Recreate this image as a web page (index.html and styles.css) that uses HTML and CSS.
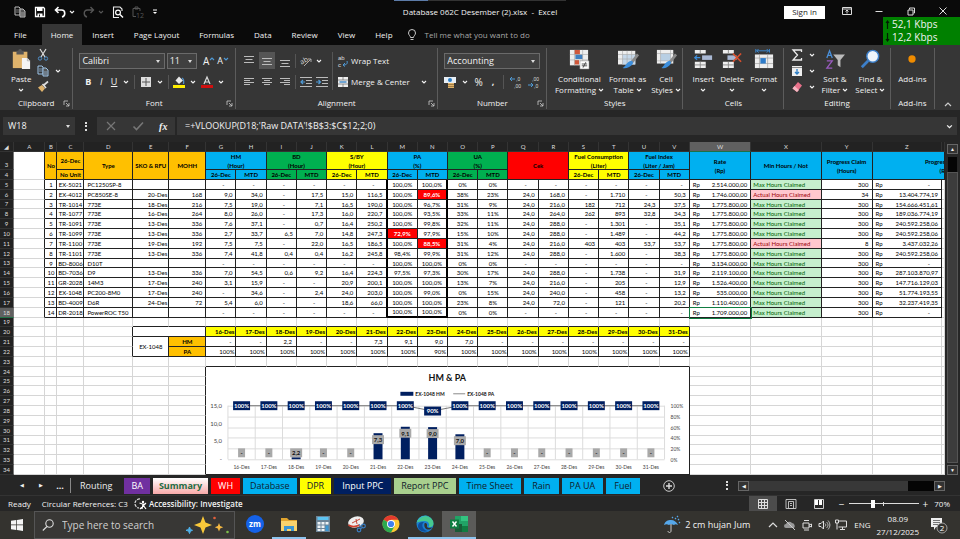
FILE: index.html
```html
<!DOCTYPE html>
<html lang="en">
<head>
<meta charset="utf-8">
<title>Database 062C Desember (2).xlsx - Excel</title>
<link rel="stylesheet" href="styles.css">
</head>
<body>
<svg class="sprite" aria-hidden="true">
  <symbol id="chev" viewBox="0 0 6 6"><path d="M1 2l2 2 2-2" fill="none" stroke="currentColor" stroke-width="1.1"/></symbol>
  <symbol id="launch" viewBox="0 0 7 7"><path d="M1 5V1h4M3 3l3 3M6 3v3H3" fill="none" stroke="#ccc" stroke-width=".8"/></symbol>
  <symbol id="pages" viewBox="0 0 12 12"><path d="M1 1h4l1 1v7H1z" fill="none" stroke="currentColor"/><path d="M6 3h3l2 2v6H6z" fill="#555" stroke="currentColor"/><path d="M7 7h3M7 9h3M2 4h3M2 6h3" stroke="currentColor" stroke-width=".7"/></symbol>
</svg>

<header class="title-bar">
  <div class="quick">
    <button aria-label="Copy"><svg class="i12 soft"><use href="#pages"/></svg></button>
    <button aria-label="Save"><svg class="i12" viewBox="0 0 12 12"><path d="M1.500 1.500h8l1 1v8h-9z" fill="none" stroke="#fff" stroke-width="1.300"/><path d="M3 1.500h5.500V5H3zM3.500 7.500h5v3h-5z" fill="#fff"/><path d="M5 8.500h1v2H5z" fill="#0a0a0a"/></svg></button>
    <button aria-label="Undo"><svg class="i12" viewBox="0 0 12 12"><path d="M4.500 1L1.500 4l3 3M2 4h5.500c4.500 0 4 6 .5 7" fill="none" stroke="#fff" stroke-width="1.600"/></svg><svg class="i6"><use href="#chev"/></svg></button>
    <button aria-label="Redo" class="dim"><svg class="i12" viewBox="0 0 12 12"><path d="M7.500 1l3 3-3 3M10 4H4.500C0 4 .5 10 4 11" fill="none" stroke="currentColor" stroke-width="1.400"/></svg><svg class="i6"><use href="#chev"/></svg></button>
    <button aria-label="Print preview"><svg class="i12" viewBox="0 0 12 12"><path d="M10 5V3L8 1H1.500v10.500H7" fill="none" stroke="#eee" stroke-width="1.100"/><circle cx="6" cy="6.500" r="2.400" fill="none" stroke="#fff" stroke-width="1.200"/><path d="M8 8.500l3 3" stroke="#fff" stroke-width="1.400"/></svg></button>
    <button aria-label="Paste values" class="dim"><svg class="i12" viewBox="0 0 12 12"><path d="M4 10.500H1v-8h7V5M3 1h3v2H3z" fill="none" stroke="currentColor"/><text x="4" y="11.500" font-size="7" fill="currentColor">12</text></svg></button>
    <button aria-label="Customize"><svg class="i6" viewBox="0 0 6 6"><path d="M1 1h4" stroke="#fff"/><path d="M1 3h4L3 5z" fill="#fff"/></svg></button>
  </div>
  <h1>Database 062C Desember (2).xlsx&nbsp; -&nbsp; Excel</h1>
  <div class="window-tools">
    <button class="signin">Sign in</button>
    <button aria-label="Ribbon options"><svg class="i10" viewBox="0 0 10 10"><path d="M.5 1.500h9v7h-9zM.5 3h9M5 7.500v-3M3.500 5.500L5 4l1.500 1.500" fill="none" stroke="#ddd"/></svg></button>
    <button aria-label="Minimize"><svg class="i10" viewBox="0 0 10 10"><path d="M1.500 5.500h7" stroke="#ddd"/></svg></button>
    <button aria-label="Restore"><svg class="i10" viewBox="0 0 10 10"><path d="M2 4h5v5H2zM3.500 3.500v-1.500H8.500v5H7.500" fill="none" stroke="#ddd"/></svg></button>
    <button aria-label="Close"><svg class="i10" viewBox="0 0 10 10"><path d="M1.500 1.500l7 7M8.500 1.500l-7 7" stroke="#ddd"/></svg></button>
  </div>
  <aside class="netspeed">
    <p><svg viewBox="0 0 5 9"><path d="M2.500 9V1M1 3l1.500-2L4 3" fill="none" stroke="#031c03" stroke-width="1.200"/></svg>52,1 Kbps</p>
    <p><svg viewBox="0 0 5 9"><path d="M2.500 0v8M1 6l1.500 2L4 6" fill="none" stroke="#031c03" stroke-width="1.200"/></svg>12,2 Kbps</p>
  </aside>
</header>

<nav class="menu">
  <a href="#file">File</a><a href="#home" class="on">Home</a><a href="#insert">Insert</a><a href="#layout">Page Layout</a><a href="#formulas">Formulas</a><a href="#data">Data</a><a href="#review">Review</a><a href="#view">View</a><a href="#help">Help</a>
  <svg class="i12" viewBox="0 0 12 12"><path d="M4.500 8.500C4.500 7 2.500 6 2.500 4a3.500 3.500 0 017 0c0 2-2 3-2 4.500zM4.500 10.500h3" fill="none" stroke="#ddd" stroke-width=".9"/></svg>
  <a href="#tell" class="tell">Tell me what you want to do</a>
</nav>

<section class="ribbon">
  <div class="group g-clip">
    <div class="tools">
      <button class="big"><svg viewBox="0 0 22 22"><path d="M2 3h16v18H2z" fill="#dfb36c"/><path d="M6 2h2a2 2 0 014 0h2v4H6z" fill="#555"/><path d="M12 10h6l3 3v9h-9z" fill="#f4f4f4"/><path d="M18 10v3h3" fill="none" stroke="#999" stroke-width=".7"/></svg><span>Paste</span><svg class="i6"><use href="#chev"/></svg></button>
      <div class="stack">
        <button aria-label="Cut"><svg class="i12" viewBox="0 0 12 12"><path d="M3 0l5 8M9 0L4 8" stroke="#ddd" stroke-width="1.200"/><circle cx="3" cy="9.500" r="1.700" fill="none" stroke="#4f8fc9"/><circle cx="9" cy="9.500" r="1.700" fill="none" stroke="#4f8fc9"/></svg></button>
        <button aria-label="Copy"><svg class="i12 pale"><use href="#pages"/></svg></button>
        <button aria-label="Format painter"><svg class="i12" viewBox="0 0 12 12"><path d="M7 4l4-3.500M5.500 3l3.500 4" stroke="#ddd" stroke-width="1.700"/><path d="M5 4l3 3.500L5 11 1 6.500z" fill="#dfb36c"/></svg></button>
      </div>
      <svg class="i6"><use href="#chev"/></svg>
    </div>
    <footer>Clipboard<svg class="i7"><use href="#launch"/></svg></footer>
  </div>

  <div class="group g-font">
    <div class="tools rows">
      <div class="row">
        <label class="combo wide"><select aria-label="Font"><option>Calibri</option></select></label>
        <label class="combo"><select aria-label="Font size"><option>11</option></select></label>
        <button class="letter grow" aria-label="Increase font size">A<svg class="i6" viewBox="0 0 6 6"><path d="M1 4l2-2 2 2" fill="none" stroke="#4f9ad6" stroke-width="1.200"/></svg></button>
        <button class="letter" aria-label="Decrease font size">A<svg class="i6" viewBox="0 0 6 6"><path d="M1 2l2 2 2-2" fill="none" stroke="#4f9ad6" stroke-width="1.200"/></svg></button>
      </div>
      <div class="row spread">
        <button class="letter"><b>B</b></button><button class="letter"><i>I</i></button><button class="letter"><u>U</u></button><svg class="i6"><use href="#chev"/></svg><span class="bar"></span>
        <button aria-label="Borders"><svg class="i12" viewBox="0 0 12 12"><path d="M1 1h10v10H1z" fill="#ddd"/><path d="M6 2v8M2 6h8" stroke="#555"/></svg></button><svg class="i6"><use href="#chev"/></svg><span class="bar"></span>
        <button aria-label="Fill color"><svg class="i12" viewBox="0 0 12 12"><path d="M6 .5l4 4L6 8 2.500 4.500z" fill="#e8e8e8"/><path d="M9 2c2 1 2 3 1.500 6" fill="none" stroke="#4f8fc9" stroke-width="1.300"/><path d="M0 9h12v3H0z" fill="#ffee00"/></svg></button><svg class="i6"><use href="#chev"/></svg>
        <button aria-label="Font color"><svg class="i12" viewBox="0 0 12 12"><path d="M3 8L6 1l3 7M4 6h4" fill="none" stroke="#ddd" stroke-width="1.200"/><path d="M0 9h12v3H0z" fill="#d00f0f"/></svg></button><svg class="i6"><use href="#chev"/></svg>
      </div>
    </div>
    <footer>Font<svg class="i7"><use href="#launch"/></svg></footer>
  </div>

  <div class="group g-align">
    <div class="tools two">
      <div class="rows">
        <div class="row">
          <button aria-label="Top align"><svg class="i12" viewBox="0 0 12 12"><path d="M1 1.500h10M2.500 4.500h7M1 7.500h10" stroke="#bbb"/></svg></button>
          <button aria-label="Middle align" class="lit"><svg class="i12" viewBox="0 0 12 12"><path d="M1 3.500h10M2.500 6.500h7M1 9.500h10" stroke="#bbb"/></svg></button>
          <button aria-label="Bottom align"><svg class="i12" viewBox="0 0 12 12"><path d="M1 5.500h10M2.500 8.500h7M1 11.500h10" stroke="#bbb"/></svg></button>
          <span class="bar"></span>
          <button aria-label="Orientation"><svg class="i12" viewBox="0 0 12 12"><path d="M4 11l7-7M8 4h3v3" fill="none" stroke="#aaa"/><text x="0" y="8" font-size="7" fill="#ddd" transform="rotate(-30 4 6)">ab</text></svg></button><svg class="i6"><use href="#chev"/></svg>
        </div>
        <div class="row">
          <button aria-label="Align left"><svg class="i12" viewBox="0 0 12 12"><path d="M1 2.500h10M1 4.500h6M1 6.500h10M1 8.500h6" stroke="#bbb"/></svg></button>
          <button aria-label="Center" class="mid-btn"><svg class="i12" viewBox="0 0 12 12"><path d="M1 2.500h10M3 4.500h6M1 6.500h10M3 8.500h6" stroke="#bbb"/></svg></button>
          <button aria-label="Align right"><svg class="i12" viewBox="0 0 12 12"><path d="M1 2.500h10M5 4.500h6M1 6.500h10M5 8.500h6" stroke="#bbb"/></svg></button>
          <span class="bar"></span>
          <button aria-label="Decrease indent"><svg class="i12" viewBox="0 0 12 12"><path d="M0 1.500h12M6 4.500h6M6 7.500h6M0 10.500h12" stroke="#bbb"/><path d="M5 6H1M3 4L1 6l2 2" fill="none" stroke="#4f9ad6" stroke-width="1.200"/></svg></button>
          <button aria-label="Increase indent"><svg class="i12" viewBox="0 0 12 12"><path d="M0 1.500h12M6 4.500h6M6 7.500h6M0 10.500h12" stroke="#bbb"/><path d="M0 6h4M2.500 4l2 2-2 2" fill="none" stroke="#4f9ad6" stroke-width="1.200"/></svg></button>
        </div>
      </div>
      <span class="bar tall"></span>
      <div class="rows">
        <button class="row text"><svg class="i12 tiny" viewBox="0 0 12 12"><text x="1" y="5" font-size="6">ab</text><text x="1" y="12" font-size="6">c</text><path d="M10 6c1 3-1 4-4 4M8 8l-2 2 2 1.500" fill="none" stroke="#4f9ad6"/></svg>Wrap Text</button>
        <button class="row text"><svg class="i12" viewBox="0 0 12 12"><path d="M1 1h10v10H1z" fill="#eee"/><path d="M1 4h10M1 8h10M6 1v3M6 8v3" stroke="#777" stroke-width=".8"/><path d="M2.500 6h7" stroke="#2b7cc4" stroke-width="1.300"/></svg>Merge &amp; Center<svg class="i6 far"><use href="#chev"/></svg></button>
      </div>
    </div>
    <footer>Alignment<svg class="i7"><use href="#launch"/></svg></footer>
  </div>

  <div class="group g-num">
    <div class="tools rows">
      <div class="row"><label class="combo wide"><select aria-label="Number format"><option>Accounting</option></select></label></div>
      <div class="row spread">
        <button aria-label="Accounting format"><svg class="i12" viewBox="0 0 12 12"><path d="M0 1h12v6H0z" fill="#e6eef6"/><circle cx="6" cy="4" r="2" fill="#2b7cc4"/><path d="M4 7h6v5H4z" fill="#dfb36c"/><path d="M4 8.500h6M4 10.500h6" stroke="#7a5a2a" stroke-width=".6"/></svg></button><svg class="i6"><use href="#chev"/></svg>
        <button class="letter big-l">%</button><button class="letter"><b>,</b></button><span class="bar"></span>
        <button aria-label="Increase decimal"><svg class="i12 tiny" viewBox="0 0 12 12"><path d="M5 3H0M2 1L0 3l2 2" fill="none" stroke="#4f9ad6"/><text x="6" y="5" font-size="5">,0</text><text x="4" y="12" font-size="5">,00</text></svg></button>
        <button aria-label="Decrease decimal"><svg class="i12 tiny" viewBox="0 0 12 12"><path d="M0 9h5M3 7l2 2-2 2" fill="none" stroke="#4f9ad6"/><text x="4" y="5" font-size="5">,00</text><text x="6" y="12" font-size="5">,0</text></svg></button>
      </div>
    </div>
    <footer>Number<svg class="i7"><use href="#launch"/></svg></footer>
  </div>

  <div class="group g-styles">
    <div class="tools">
      <button class="big"><svg viewBox="0 0 22 22"><path d="M1 1h20v17H1z" fill="#eee"/><path d="M6 1h6v5H6zM6 12h5v5H6z" fill="#d0573a"/><path d="M7 6h8v5H7z" fill="#3f7fbf"/><path d="M1 6h20M1 12h20M6 1v17M15 1v17" stroke="#aaa" stroke-width=".7"/><path d="M12 13h10v9H12z" fill="#fff" stroke="#888" stroke-width=".6"/><path d="M14 16.500h6M14 18.500h6M18.500 14.500l-3 6" stroke="#333" stroke-width=".9"/></svg><span>Conditional</span><span>Formatting<svg class="i6"><use href="#chev"/></svg></span></button>
      <button class="big"><svg viewBox="0 0 22 22"><path d="M0 2h19v15H0z" fill="#eee"/><path d="M5 6h14v11H5z" fill="#c5d8ea"/><path d="M0 6h19M0 11h19M5 2v15M10 2v15M15 2v15" stroke="#aaa" stroke-width=".7"/><path d="M22 6l-7 9" stroke="#8a8a8a" stroke-width="3"/><path d="M15 13c2 1 2 3 0 5s-6 4-10 3c4-2 4-7 10-8z" fill="#3d8edb"/></svg><span>Format as</span><span>Table<svg class="i6"><use href="#chev"/></svg></span></button>
      <button class="big"><svg viewBox="0 0 22 22"><path d="M1 1h18v15H1z" fill="#eee"/><path d="M5 5h11v8H5z" fill="#b8cfe4"/><path d="M1 5h18M1 13h18M5 1v15M16 1v15" stroke="#aaa" stroke-width=".7"/><path d="M22 6l-7 9" stroke="#8a8a8a" stroke-width="3"/><path d="M15 13c2 1 2 3 0 5s-5 4-9 3c3-2 4-7 9-8z" fill="#3d8edb"/></svg><span>Cell</span><span>Styles<svg class="i6"><use href="#chev"/></svg></span></button>
    </div>
    <footer>Styles</footer>
  </div>

  <div class="group g-cells">
    <div class="tools">
      <button class="big"><svg viewBox="0 0 22 22"><path d="M2 1h12v4H2zM2 14h12v7H2z" fill="#eee"/><path d="M8 1v4M8 14v7M2 17.500h12" stroke="#888"/><path d="M10 7h11v5H10z" fill="#a9b8d4"/><path d="M8 9.500H2M4.500 7L2 9.500 4.500 12" fill="none" stroke="#3d8edb" stroke-width="1.400"/></svg><span>Insert</span><svg class="i6"><use href="#chev"/></svg></button>
      <button class="big"><svg viewBox="0 0 22 22"><path d="M1 1h12v4H1zM1 14h12v7H1z" fill="#eee"/><path d="M7 1v4M7 14v7M1 17.500h12" stroke="#888"/><path d="M6 7h10v5H6z" fill="#a9b8d4"/><path d="M12 5l9 9M21 5l-9 9" stroke="#d8502e" stroke-width="1.800"/></svg><span>Delete</span><svg class="i6"><use href="#chev"/></svg></button>
      <button class="big"><svg viewBox="0 0 22 22"><path d="M2 0v4M17 0v4M3 2h13M5 0L3 2l2 2M14 0l2 2-2 2" fill="none" stroke="#3d8edb"/><path d="M1 6h20v15H1z" fill="#eee"/><path d="M1 10h20M1 16h20M6 6v15M15 6v15" stroke="#999" stroke-width=".7"/><path d="M7 10h6v6H7z" fill="#2f7cc9"/></svg><span>Format</span><svg class="i6"><use href="#chev"/></svg></button>
    </div>
    <footer>Cells</footer>
  </div>

  <div class="group g-edit">
    <div class="tools">
      <div class="stack">
        <button aria-label="AutoSum"><svg class="i12" viewBox="0 0 12 12"><path d="M10.500 3V1H2l4.500 5L2 11h8.500V9" fill="none" stroke="#eee" stroke-width="1.300"/></svg><svg class="i6"><use href="#chev"/></svg></button>
        <button aria-label="Fill"><svg class="i12" viewBox="0 0 12 12"><path d="M1 1h10v10H1z" fill="#eee"/><path d="M6 4v5M4 7l2 2 2-2" fill="none" stroke="#2b7cc4" stroke-width="1.300"/><path d="M1 2.500h10" stroke="#888"/></svg><svg class="i6"><use href="#chev"/></svg></button>
        <button aria-label="Clear"><svg class="i12" viewBox="0 0 12 12"><path d="M7 1l4 3.500L6 11 1.500 7.500z" fill="#e8718a"/><path d="M3.500 5l4.500 4-2 2-4.500-3.500z" fill="#f4b7c2"/></svg><svg class="i6"><use href="#chev"/></svg></button>
      </div>
      <button class="big"><svg viewBox="0 0 22 22"><path d="M2 10L5 2l3 8M3 7h4" fill="none" stroke="#4a8fd8" stroke-width="1.400"/><path d="M2 13h6l-6 8h6" fill="none" stroke="#9a5bc0" stroke-width="1.400"/><path d="M9 6h13l-5 6v8l-3-2v-6z" fill="#bbb"/></svg><span>Sort &amp;</span><span>Filter<svg class="i6"><use href="#chev"/></svg></span></button>
      <button class="big"><svg viewBox="0 0 22 22"><path d="M9 13l-7 7" stroke="#3d7fc9" stroke-width="3"/><circle cx="14" cy="8" r="6.500" fill="#eef4fa" stroke="#3d7fc9" stroke-width="1.600"/></svg><span>Find &amp;</span><span>Select<svg class="i6"><use href="#chev"/></svg></span></button>
    </div>
    <footer>Editing</footer>
  </div>

  <div class="group g-add">
    <div class="tools">
      <button class="big"><svg viewBox="0 0 22 22"><circle cx="11" cy="11" r="4" fill="#f08c00"/></svg><span>Add-ins</span></button>
    </div>
    <footer>Add-ins</footer>
  </div>
  <div class="collapse"><svg class="i10" viewBox="0 0 10 10"><path d="M2 7l3-3 3 3" fill="none" stroke="#ccc" stroke-width="1.200"/></svg></div>
</section>

<section class="formula">
  <label class="namebox"><input aria-label="Name box" value="W18"></label>
  <span class="grip"></span>
  <div class="fx">
    <svg class="i12" viewBox="0 0 12 12"><path d="M2 2l8 8M10 2l-8 8" stroke="#777" stroke-width="1.200"/></svg>
    <svg class="i12" viewBox="0 0 12 12"><path d="M1.500 6.500l3 3L11 2.500" fill="none" stroke="#777" stroke-width="1.600"/></svg>
    <i>fx</i>
  </div>
  <label class="fbar"><input aria-label="Formula bar" value="=+VLOOKUP(D18;'Raw DATA'!$B$3:$C$12;2;0)"><svg class="i7"><use href="#chev"/></svg></label>
</section>

<main class="sheet">
  <table id="grid"></table>
  <div class="vscroll"><button aria-label="Scroll up">▲</button><span></span><button aria-label="Scroll down">▼</button></div>
</main>

<nav class="sheet-tabs">
  <span class="arrow">◀</span><span class="arrow">▶</span><span class="more">...</span>
  <div class="tab-list">
    <a href="#s1" class="plain">Routing</a><a href="#s2" class="purple">BA</a><a href="#s3" class="current">Summary</a><a href="#s4" class="red">WH</a><a href="#s5">Database</a><a href="#s6" class="yellow">DPR</a><a href="#s7" class="navy">Input PPC</a><a href="#s8" class="green">Report PPC</a><a href="#s9">Time Sheet</a><a href="#s10">Rain</a><a href="#s11">PA UA</a><a href="#s12">Fuel</a>
  </div>
  <button class="plus" aria-label="New sheet"><svg class="i12" viewBox="0 0 12 12"><circle cx="6" cy="6" r="5.300" fill="none" stroke="#ddd" stroke-width=".9"/><path d="M6 3v6M3 6h6" stroke="#ddd" stroke-width="1.400"/></svg></button>
  <span class="grip"></span>
  <div class="hscroll"><button aria-label="Scroll left">◀</button><span></span><button aria-label="Scroll right">▶</button></div>
</nav>

<section class="status">
  <span>Ready</span><span>Circular References: C3</span>
  <span class="acc"><svg class="i12" viewBox="0 0 12 12"><path d="M5 1a4.500 4.500 0 00-1 9" fill="none" stroke="#ddd" stroke-width="1.200" stroke-dasharray="3 1"/><circle cx="8" cy="4" r="1.200" fill="#fff"/><path d="M4.500 5l3 1h3M8 6l-1 5M8 7l3 4M5 11l6-6" stroke="#fff" stroke-width="1.200"/></svg><b>Accessibility: Investigate</b></span>
  <div class="view-tools">
    <div class="views">
      <button class="on" aria-label="Normal"><svg class="i12" viewBox="0 0 12 12"><path d="M1.500 1.500h9v9h-9zM1.500 4.500h9M1.500 7.500h9M4.500 1.500v9M7.500 1.500v9" fill="none" stroke="#ddd"/></svg></button>
      <button aria-label="Page layout"><svg class="i12" viewBox="0 0 12 12"><path d="M1 1.500h10v9H1zM3.500 3.500h5v7h-5zM5 5.500h2M5 7.500h2" fill="none" stroke="#ccc" stroke-width=".9"/></svg></button>
      <button aria-label="Page break"><svg class="i12" viewBox="0 0 12 12"><path d="M1.500 1.500h9v9h-9z" fill="none" stroke="#ccc"/><path d="M2 2h3v5H2zM6 2h3v5H6z" fill="#fff"/></svg></button>
    </div>
    <div class="zoom"><span>−</span><input type="range" min="0" max="100" value="34" aria-label="Zoom"><span>+</span></div>
    <output>70%</output>
  </div>
</section>

<footer class="taskbar">
  <button class="start" aria-label="Start"><svg class="i12" viewBox="0 0 12 12"><path d="M0 1.700L5.300 1v4.600H0zM6 .9L12 0v5.600H6zM0 6.300h5.300V11L0 10.300zM6 6.300h6V12l-6-.9z" fill="#f4f4f4"/></svg></button>
  <label class="search"><svg class="i12" viewBox="0 0 12 12"><circle cx="7.500" cy="4.500" r="3.700" fill="none" stroke="#ddd" stroke-width="1.100"/><path d="M5 7.500L.8 11.500" stroke="#ddd" stroke-width="1.100"/></svg><input placeholder="Type here to search" aria-label="Search"><svg class="spark" viewBox="0 0 44 18"><path d="M17 0l2.500 6.500L26 9l-6.500 2.500L17 18l-2.500-6.500L8 9l6.500-2.500z" fill="#f9c83a"/><path d="M33 7l1.200 3 3 1.200-3 1.200L33 15.500l-1.200-3.100-3-1.200 3-1.200z" fill="#f5b942"/><path d="M3.500 11l1 2.500 2 .8-2 .8-1 2.500-1-2.500-2.500-.8 2.500-.8z" fill="#4fb0e8" stroke="#4fb0e8"/><circle cx="28.500" cy="2" r="1.300" fill="#e2603c"/><circle cx="41.500" cy="16" r="1.300" fill="#7cc04a"/></svg></label>
  <div class="apps">
    <button aria-label="Zoom"><svg viewBox="0 0 20 20"><circle cx="10" cy="10" r="9" fill="#1562e8"/><text x="10" y="13" font-size="8" font-weight="700" fill="#fff" text-anchor="middle">zm</text></svg></button>
    <button aria-label="Files" class="open"><svg viewBox="0 0 20 20"><path d="M2 4h6l2 2h8v10H2z" fill="#e0a42e"/><path d="M2 7h16v10H2z" fill="#f9d36c"/><path d="M5 17v-5h10v5h-3v-2H8v2z" fill="#3b96d2"/></svg></button>
    <button aria-label="Calculator"><svg viewBox="0 0 20 20"><path d="M3 2h14v16H3z" fill="#6d8598"/><path d="M4.500 3h11v3h-11z" fill="#5cc3f0"/><path d="M4.500 8h3v2.500h-3zM8.500 8h3v2.500h-3zM12.500 8h3v2.500h-3zM4.500 11.500h3V14h-3zM8.500 11.500h3V14h-3zM4.500 15h3v2h-3zM8.500 15h3v2h-3z" fill="#eef3f6"/><path d="M12.500 11.500h3V17h-3z" fill="#3b96d2"/></svg></button>
    <button aria-label="Snipping tool"><svg viewBox="0 0 20 20"><ellipse cx="9" cy="8" rx="8" ry="5.500" fill="#eee" transform="rotate(-15 9 8)"/><path d="M1.500 11c3 2 7 2 11 0" fill="none" stroke="#d0402e" stroke-width="1.600"/><path d="M5 9l8-4M9 5l1 5" stroke="#c54a3a"/><circle cx="12" cy="16" r="1.800" fill="none" stroke="#3b7fc4" stroke-width="1.200"/><circle cx="16.500" cy="12" r="1.800" fill="none" stroke="#3b7fc4" stroke-width="1.200"/><path d="M12 10l3 5" stroke="#3b7fc4"/></svg></button>
    <button aria-label="Chrome"><svg viewBox="0 0 20 20"><circle cx="10" cy="10" r="8.500" fill="#fcc934"/><path d="M10 10L2.600 5.700A8.500 8.500 0 0117.400 5.700H10z" fill="#e33b2e"/><path d="M10 10L2.600 5.700A8.500 8.500 0 0010 18.500l3.700-6.400z" fill="#2da94f"/><circle cx="10" cy="10" r="4" fill="#fff"/><circle cx="10" cy="10" r="3.100" fill="#4080ee"/></svg></button>
    <button aria-label="Edge" class="open"><svg viewBox="0 0 20 20"><circle cx="10" cy="10" r="8.500" fill="#1b7fd0"/><path d="M1.600 9A8.500 8.500 0 0118.500 9.500c0 3-2.500 4-5 3.500 2-3-.5-6-4-6-4 0-7 1-7.900 2z" fill="#46c98f"/><path d="M1.600 9c1-5 6-8 11-7C6 2 3 6 1.600 9z" fill="#36b3d8"/><path d="M9 8c-3 2-2 8 4 9-5 2-10-1-10-5 0-3 3-4.500 6-4z" fill="#0f4f9c"/><path d="M9.500 9.500c1-1 3 0 2.500 2s1 3 5 2c-2 4-9 2-7.500-4z" fill="#34332f"/></svg></button>
    <button aria-label="Excel" class="open active"><svg viewBox="0 0 20 20"><path d="M6 2h13v16H6z" fill="#21a366"/><path d="M12 2h7v5h-7z" fill="#33c481"/><path d="M6 10h7v8H6z" fill="#185c37"/><path d="M13 12h6v6h-6z" fill="#107c41"/><path d="M1 5.500h9v9H1z" fill="#107c41"/><path d="M3.500 7.500l4 5M7.500 7.500l-4 5" stroke="#fff" stroke-width="1.400"/></svg></button>
  </div>
  <div class="tray">
    <span class="weather"><svg viewBox="0 0 18 18"><path d="M1 9c1-4 4-5 7-5s6 2 7 5c-2-1-3-1-4 0-2-1-4-1-5 0-2-1-3-1-5 0z" fill="#56a8ea"/><path d="M8 8v7c0 2-3 2-3 0" fill="none" stroke="#ccc"/><path d="M9 2l1-1M12 3l1-1M15 4l1-1M14 1l1-1M16 7l1-1" stroke="#56a8ea" stroke-width="1.300"/></svg>2 cm hujan Jum</span>
    <svg class="i12" viewBox="0 0 12 12"><path d="M2 8l4-4 4 4" fill="none" stroke="#ddd" stroke-width="1.200"/></svg>
    <svg class="i12" viewBox="0 0 12 12"><path d="M2 9a2 2 0 010-4 3.500 3.500 0 016-1 3 3 0 012 5z" fill="#999"/><path d="M1 1l10 10" stroke="#ccc"/></svg>
    <svg class="i12" viewBox="0 0 12 12"><path d="M2 4h6v5H2zM8 6l2.500-1v3L8 7M3 1.500h5M3 11h5" fill="none" stroke="#ddd"/></svg>
    <svg class="i12" viewBox="0 0 12 12"><path d="M1 4.500h2L5.500 2v8L3 7.500H1z" fill="none" stroke="#ddd"/><path d="M7 4.500c1 1 1 2 0 3M8.500 3c2 2 2 4 0 6M10 1.500c2.500 3 2.500 6 0 9" fill="none" stroke="#ddd" stroke-width=".8"/></svg>
    <svg class="i12" viewBox="0 0 12 12"><path d="M3.500 2h8v6h-8M5 10.500h5M7.500 8v2.500M.5 1h3v3h-3zM2 4v6.500" fill="none" stroke="#ddd"/></svg>
    <span class="lang">ENG</span>
    <time>08.09<br>27/12/2025</time>
    <span class="note"><svg viewBox="0 0 18 18"><path d="M1 2h11v9H6l-2 3v-3H1z" fill="#eee"/><path d="M3 4.500h7M3 6.500h7M3 8.500h5" stroke="#555" stroke-width=".8"/><circle cx="12" cy="12" r="5" fill="#34332f" stroke="#bbb" stroke-width=".8"/><text x="12" y="15" font-size="8" fill="#fff" text-anchor="middle">2</text></svg></span>
  </div>
</footer>
<script src="sheet.js"></script>
</body>
</html>
```

FILE: styles.css
```css
* { box-sizing: border-box; }
html, body { height: 100%; }
body {
  margin: 0; display: flex; flex-direction: column; overflow: hidden;
  background: #262626; color: #f2f2f2;
  font: 8px/10px "Open Sans", "Noto Sans", sans-serif;
}
button, input, select { font: inherit; color: inherit; background: none; border: 0; padding: 0; margin: 0; }
button { display: flex; align-items: center; justify-content: center; }
a { color: inherit; text-decoration: none; }
svg { display: block; flex: none; overflow: visible; }
.sprite { position: absolute; width: 0; height: 0; }
.i6 { width: 6px; height: 6px; }
.i7 { width: 7px; height: 7px; }
.i10 { width: 10px; height: 10px; }
.i12 { width: 12px; height: 12px; }
.soft { color: #bbb; }
.pale { color: #9cc3e6; }
.dim { color: #555; }
.tiny { font-family: "Liberation Sans", sans-serif; fill: #ddd; }

/* title bar */
.title-bar { position: relative; flex: none; height: 24px; background: #0a0a0a; display: grid; grid-template-columns: 1fr auto 1fr; align-items: center; }
.title-bar::before { content: ""; position: absolute; top: 0; left: 41%; width: 18%; height: 1px; background: linear-gradient(90deg, #5c7ba8 20%, #333 20%); }
.quick { display: flex; gap: 8px; padding-left: 14px; }
.quick button { gap: 3px; }
.title-bar h1 { margin: 0; font-size: 8px; font-weight: 400; }
.window-tools { display: flex; justify-content: flex-end; align-items: center; gap: 22px; padding-right: 12px; }
.signin { background: #fff; color: #222; width: 41px; height: 13px; margin-right: -5px; }
.netspeed { position: absolute; right: 0; top: 17px; width: 77px; height: 28px; background: #008000; z-index: 2; padding: 1px 2px; font-size: 10px; line-height: 13px; }
.netspeed p { margin: 0; display: flex; align-items: center; gap: 2px; }
.netspeed svg { width: 5px; height: 9px; }
.window-tools button:not(.signin) { padding-bottom: 3px; }

/* menu */
.menu { flex: none; height: 21px; background: #0a0a0a; display: flex; align-items: stretch; padding-left: 4px; }
.menu a { padding: 0 10px; display: flex; align-items: center; }
.menu a:first-child { margin-right: 5px; }
.menu .on { background: #363636; padding: 0 9px; }
.menu > svg { align-self: center; margin-left: 3px; }
.menu .tell { color: #a6a6a6; padding-left: 7px; }

/* ribbon */
.ribbon { flex: none; height: 65px; background: #363636; display: flex; padding: 3px 0 1px; }
.group { position: relative; display: flex; flex-direction: column; border-right: 1px solid #5c5c5c; min-width: 0; }
.g-clip { flex: 73 1 0; }
.g-font { flex: 163 1 0; }
.g-align { flex: 203 1 0; }
.g-num { flex: 109 1 0; }
.g-styles { flex: 136 1 0; }
.g-cells { flex: 101 1 0; }
.g-edit { flex: 106 1 0; }
.g-add { flex: 44 1 0; }
.collapse { flex: 25 1 0; display: flex; align-items: flex-end; justify-content: center; }
.group footer { height: 12px; line-height: 12px; text-align: center; }
.group footer svg { position: absolute; right: 2px; bottom: 2px; }
.tools { flex: 1; display: flex; justify-content: center; gap: 6px; padding: 1px 4px 0; align-items: flex-start; min-height: 0; }
.big { flex-direction: column; justify-content: flex-start; line-height: 11px; }
.big > svg:first-child { width: 20px; height: 20px; margin-bottom: 4px; }
.big > .i6 { margin-top: 3px; }
.big span { display: flex; align-items: center; gap: 2px; white-space: nowrap; }
.stack { display: flex; flex-direction: column; gap: 4px; }
.stack button { gap: 6px; }
.g-clip .tools > .i6 { margin-top: 19px; }
.g-styles .tools { gap: 5px; padding-left: 10px; }
.g-cells .tools { padding-left: 7px; }
.g-edit .tools { gap: 7px; padding-left: 6px; }
.rows { display: flex; flex-direction: column; justify-content: flex-start; gap: 4px; }
.tools.rows { align-items: stretch; padding: 4px 6px 0; }
.row { display: flex; align-items: center; gap: 4px; height: 17px; }
.g-font .row:first-child { gap: 2px; }
.spread { justify-content: space-between; padding: 0 5px; }
.g-num .spread { padding: 0; }
.combo { position: relative; flex: 30 1 0; display: flex; border: 1px solid #6a6a6a; background: #404040; height: 16px; font-size: 9px; }
.combo.wide { flex: 88 1 0; }
.combo select { appearance: none; width: 100%; padding-left: 2px; }
.combo::after, .namebox::after { content: ""; position: absolute; right: 4px; top: 6px; border: 2px solid transparent; border-top: 3px solid #ddd; }
.letter { font-size: 9px; min-width: 8px; }
.letter svg { align-self: flex-start; }
.grow { margin-left: 4px; font-size: 10px; }
.big-l { font-size: 10px; }
.lit, .mid-btn { height: 17px; padding: 0 2px; }
.lit { background: #555; }
.bar { width: 1px; height: 14px; background: #555; }
.two { gap: 4px; padding: 4px 4px 0 7px; justify-content: flex-start; }
.two .row { gap: 4px; }
.bar.tall { height: 38px; }
.two .text { font-size: 8px; white-space: nowrap; justify-content: flex-start; gap: 2px; }
.far { margin-left: 9px; }

/* formula bar */
.formula { flex: none; display: flex; align-items: center; height: 32px; padding: 0 3px; font-size: 9px; }
.namebox { position: relative; width: 72px; height: 18px; background: #363636; display: flex; padding-left: 5px; }
.namebox::after { right: 5px; top: 8px; }
.namebox input, .fbar input { width: 100%; }
.grip { width: 1px; height: 9px; margin: 0 10px; border-left: 2px dotted #ddd; }
.fx { display: flex; align-items: center; justify-content: space-around; width: 78px; height: 18px; background: #363636; margin-right: 2px; }
.fx i { font: italic 700 10px "Liberation Serif", serif; }
.fbar { flex: 1; display: flex; align-items: center; height: 18px; background: #363636; padding: 0 4px 0 8px; }

/* grid */
.sheet { flex: 1; min-height: 0; display: flex; }
#grid {
  flex: 1; min-width: 0; display: grid; background: #fff; color: #000;
  font: 6px/9px Lato, sans-serif;
  grid-template-columns: 56fr 126fr 48fr 108fr 196fr 144fr 148fr repeat(16, 121fr) 246fr 282fr 204fr 278fr 12fr;
  grid-template-rows: 10px 18px 10px repeat(30, minmax(0, 1fr));
}
#grid thead, #grid tbody, #grid tr { display: contents; }
#grid th, #grid td {
  display: flex; align-items: center; min-width: 0; min-height: 0; padding: 0 3px; overflow: hidden;
  white-space: pre; font-weight: 400; border: 0 solid #d6d6d6; border-width: 0 1px 1px 0;
}
#grid .head { background: #222; color: #ddd; justify-content: center; border-color: #333; padding: 0; }
#grid .low { align-items: flex-end; }
#grid .hot { background: #606060; border-bottom-color: #1e7145; }
#grid .side { border-right-color: #777; }
#grid .k { border-color: #222; }
#grid .kr { border-right-color: #222; }
#grid .kb { border-bottom-color: #222; }
#grid .c { justify-content: center; text-align: center; }
#grid .r { justify-content: flex-end; }
#grid .dash { justify-content: flex-end; padding-right: 11px; }
#grid .edge { padding-right: 6px; }
#grid .mid { padding-right: 4px; }
#grid .b { font-weight: 700; padding: 0; }
#grid .tight { padding-right: 1px; }
#grid .unit, #grid .last { padding: 0; }
#grid .two-way { justify-content: space-between; }
#grid .gold { background: #ffc000; }
#grid .blue { background: #00b0f0; }
#grid .grn { background: #00b050; }
#grid .yel { background: #ffff00; }
#grid .rd { background: #ff0000; }
#grid .alert { background: #ff0000; color: #fff; font-weight: 700; }
#grid .good { background: #c6efce; color: #006100; padding-left: 2px; }
#grid .bad { background: #ffc7ce; color: #9c0006; padding-left: 2px; }
#grid .thick { border-right-width: 2px; border-right-color: #000; }
#grid .thick-b { border-bottom-width: 2px; border-bottom-color: #000; }
#grid .sel { outline: 1px solid #107c41; z-index: 1; }
#grid .wide-head span { flex: none; width: 202%; }
#grid .wide-head { justify-content: flex-start; }
.s2 { grid-column: span 2; }
.s16 { grid-column: span 16; }
.d2 { grid-row: span 2; }
.d11 { grid-row: span 11; }
#grid .chart { padding: 0; border-color: #222; }
.chart svg { width: 100%; height: 100%; }

.vscroll { flex: none; width: 15px; display: flex; flex-direction: column; align-items: center; gap: 18px; padding-top: 2px; background: #262626; }
.vscroll span { flex: 1; width: 11px; background: #3c3c3c; border: 1px solid #555; box-shadow: 0 -16px 0 -1px #050505; margin-bottom: -16px; }
.vscroll button, .hscroll button { width: 11px; height: 10px; background: #333; border: 1px solid #666; font-size: 5px; line-height: 8px; }

/* sheet tabs */
.sheet-tabs { flex: none; height: 20px; padding: 2px 0 1px; display: flex; align-items: center; font-size: 9px; line-height: 15px; }
.arrow { width: 19px; text-align: center; font-size: 5px; }
.arrow:first-child { margin-left: 12px; }
.more { width: 21px; text-align: center; font-weight: 700; border-right: 1px solid #888; }
.tab-list { display: flex; }
.tab-list a { background: #00b0f0; color: #10202c; padding: 0 7px; margin-right: 3px; height: 16px; white-space: nowrap; }
.tab-list .plain { background: none; color: #eee; padding: 0 9px; }
.tab-list .purple { background: #7030a0; color: #fff; }
.tab-list .current { background: linear-gradient(#fff, #f8a8a8); color: #1e6b41; font-weight: 700; padding: 0 6px; }
.tab-list .red { background: #ff0000; color: #fff; }
.tab-list .yellow { background: #ffff00; }
.tab-list .navy { background: #001f60; color: #fff; padding: 0 8px; }
.tab-list .green { background: #a9d08e; }
.tab-list a:nth-child(n+9) { padding: 0 8px; }
.plus { margin-left: 20px; }
.sheet-tabs .grip { margin-left: auto; }
.hscroll { flex: none; width: 207px; display: flex; align-items: center; margin-right: 15px; background: linear-gradient(90deg, #383838 82%, #050505 82%); }
.hscroll span { flex: 1; }

/* status */
.status { flex: none; height: 16px; display: flex; align-items: center; gap: 11px; padding: 0 10px 0 8px; border-top: 1px solid #333; }
.acc { display: flex; align-items: center; gap: 2px; margin-left: -4px; }
.acc b { font-weight: 600; }
.view-tools { margin-left: auto; display: flex; align-items: center; gap: 6px; }
.views { display: flex; }
.views button { width: 28px; height: 15px; }
.views .on { background: #4c4c4c; }
.zoom { display: flex; align-items: center; gap: 4px; font-size: 10px; }
.zoom input { appearance: none; width: 70px; height: 10px; background: linear-gradient(#ddd, #ddd) center/100% 1px no-repeat, linear-gradient(#ddd, #ddd) center/1px 4px no-repeat; }
.zoom input::-webkit-slider-thumb { appearance: none; width: 4px; height: 8px; background: #fff; }

/* taskbar */
.taskbar { flex: none; height: 28px; background: #34332f; display: flex; align-items: stretch; font-size: 10px; }
.start { width: 34px; }
.search { width: 201px; border: 1px solid #555; background: #383735; display: flex; align-items: center; padding: 0 4px 0 7px; gap: 8px; }
.search input { flex: 1; min-width: 0; font-size: 10px; }
.search input::placeholder { color: #d0d0d0; }
.spark { width: 44px; height: 18px; }
.apps { display: flex; margin-left: 3px; }
.apps button { width: 34px; border-bottom: 2px solid transparent; }
.apps svg { width: 20px; height: 20px; }
.apps .open { border-bottom-color: #8dc4ee; }
.apps .active { background: #5b5b59; }
.tray { margin-left: auto; display: flex; align-items: center; gap: 5px; font-size: 8px; padding-right: 12px; }
.weather { display: flex; align-items: center; gap: 4px; font-size: 9px; margin-right: 12px; white-space: nowrap; }
.weather svg, .note svg { width: 18px; height: 18px; }
.lang { margin-left: 2px; }
.tray time { text-align: center; line-height: 13px; margin: 0 6px 0 1px; }
```

FILE: sheet.js
```js
const grid = document.getElementById("grid");
const cell = (cls, text = "", tag = "td", cs = 1, rs = 1) =>
  `<${tag} class="${cls}"${cs > 1 ? ` colspan="${cs}"` : ""}${rs > 1 ? ` rowspan="${rs}"` : ""}>${text}</${tag}>`;
const blanks = (n, cls = "") => cell(cls).repeat(n);
const side = n => cell("head side low" + (n === 18 ? " hot" : ""), n, "th");
const tail = blanks(4) + cell("last");

const letters = "ABCDEFGHIJKLMNOPQRSTUVWXYZ".split("");
let html = "<thead><tr>" + cell("head", "◢", "th") +
  letters.map(l => cell("head" + (l === "W" ? " hot" : ""), l, "th")).join("") + cell("head", "", "th") + "</tr></thead><tbody>";

const merged = (color, text) => cell(`k b c d2 ${color}`, text, "th", 1, 2);
const pair = (color, text) => cell(`k b c s2 ${color}`, text, "th", 2);
html += "<tr>" + side(3) + cell("kr d2", "", "td", 1, 2) + merged("gold", "No") + cell("k b c gold", "26-Dec", "th") +
  merged("gold", "Type") + merged("gold", "SKO &amp; RFU") + merged("gold", "MOHH") +
  pair("blue", "HM\n(Hour)") + pair("grn", "BD\n(Hour)") + pair("yel", "S/BY\n(Hour)") +
  pair("blue", "PA\n(%)") + pair("grn", "UA\n(%)") + cell("k b c s2 d2 rd", "Cek", "th", 2, 2) +
  pair("yel", "Fuel Consumption\n(Liter)") + pair("blue", "Fuel Index\n(Liter / Jam)") +
  merged("blue", "Rate\n(Rp)") + merged("blue", "Min Hours / Not") + merged("blue", "Progress Claim\n(Hours)") +
  cell("k b c s2 d2 blue wide-head", "<span>Progress Claim\n(Rp)</span>", "th", 2, 2) + "</tr>";
html += "<tr>" + side(4) + cell("k b c gold", "No Unit", "th") +
  ["blue", "grn", "yel", "blue", "grn", "yel", "blue"].map(c =>
    cell(`k b c ${c}`, "26-Dec", "th") + cell(`k b c ${c}`, "MTD", "th")).join("") + "</tr>";

const data = `EX-5021|PC1250SP-8|||- - - - - - 100,0% 100,0% 0% 0% - - - - - -|2.514.000,00|300|-
EX-4012|PC850SE-8|20-Des|168|9,0 34,0 - 17,5 15,0 116,5 100,0% 89,6% 38% 23% 24,0 168,0 - 1.710 - 50,3|1.746.000,00|34|13.404.774,19
TR-1014|773E|18-Des|216|7,5 19,0 - 7,1 16,5 190,0 100,0% 96,7% 31% 9% 24,0 216,0 182 712 24,3 37,5|1.775.800,00|300|154.666.451,61
TR-1077|773E|16-Des|264|8,0 26,0 - 17,3 16,0 220,7 100,0% 93,5% 33% 11% 24,0 264,0 262 893 32,8 34,3|1.775.800,00|300|189.036.774,19
TR-1091|773E|13-Des|336|7,6 37,1 - 0,7 16,4 250,2 100,0% 99,8% 32% 11% 24,0 288,0 - 1.301 - 35,1|1.775.800,00|300|240.592.258,06
TR-1099|773E|13-Des|336|2,7 33,7 6,5 7,0 14,8 247,3 72,9% 97,9% 15% 10% 24,0 288,0 - 1.489 - 44,2|1.775.800,00|300|240.592.258,06
TR-1100|773E|19-Des|192|7,5 7,5 - 22,0 16,5 186,5 100,0% 88,5% 31% 4% 24,0 216,0 403 403 53,7 53,7|1.775.800,00|8|3.437.032,26
TR-1101|773E|13-Des|336|7,4 41,8 0,4 0,4 16,2 245,8 98,4% 99,9% 31% 12% 24,0 288,0 - 1.600 - 38,3|1.775.800,00|300|240.592.258,06
BD-8006|D10T|||- - - - - - 100,0% 100,0% 0% 0% - - - - - -|3.134.000,00|300|-
BD-7036|D9|13-Des|336|7,0 54,5 0,6 9,2 16,4 224,3 97,5% 97,3% 30% 17% 24,0 288,0 - 1.738 - 31,9|2.119.100,00|300|287.103.870,97
GR-2028|14M3|17-Des|240|3,1 15,9 - - 20,9 200,1 100,0% 100,0% 13% 7% 24,0 216,0 - 205 - 12,9|1.526.400,00|300|147.716.129,03
EX-1048|PC200-8M0|17-Des|240|- 34,6 - 2,4 24,0 203,0 100,0% 99,0% 0% 15% 24,0 240,0 - 458 - 13,2|535.000,00|300|51.774.193,55
BD-4009|D6R|24-Des|72|5,4 6,0 - - 18,6 66,0 100,0% 100,0% 23% 8% 24,0 72,0 - 121 - 20,2|1.110.400,00|300|32.237.419,35
DR-2018|PowerROC T50|||- - - - - - 100,0% 100,0% 0% 0% - - - - - -|1.709.000,00|300|-`;

data.split("\n").forEach((line, i) => {
  const [unit, type, date, mohh, nums, rate, hours, claim] = line.split("|");
  const actual = hours !== "300";
  html += "<tr>" + side(i + 5) + cell("kr") + cell("k c unit", i + 1) + cell("k c unit", unit) + cell("k", type) +
    cell("k r tight", date) + cell("k r", mohh) +
    nums.split(" ").map((v, j) => {
      let cls = "k " + (j >= 6 && j <= 9 ? "c" : v === "-" ? "dash" + (j === 15 ? " edge" : "") : "r");
      if ((j === 6 || j === 7) && parseFloat(v) < 90) cls += " alert";
      if (j === 5 || j === 7) cls += " thick";
      if (i === 13 && (j === 6 || j === 7)) cls += " thick-b";
      return cell(cls, v);
    }).join("") +
    cell("k two-way" + (i === 13 ? " sel" : ""), `<span>Rp</span><span>${rate}</span>`) +
    cell("k " + (actual ? "bad" : "good"), (actual ? "Actual" : "Max") + " Hours Claimed") +
    cell("k r", hours) + cell("k two-way" + (claim === "-" ? " dash" : ""), `<span>Rp</span><span>${claim}</span>`) +
    cell("last") + "</tr>";
});

const days = Array.from({ length: 16 }, (_, i) => `${16 + i}-Des`);
const hm = ["-", "-", "2,2", "-", "-", "7,3", "9,1", "9,0", "7,0", "-", "-", "-", "-", "-", "-", "-"];
const pa = hm.map((_, i) => (i === 7 ? 90 : 100));
html += "<tr>" + side(19) + blanks(4) + blanks(18, "kb") + tail + "</tr>";
html += "<tr>" + side(20) + blanks(3) + cell("kr") + cell("k s2", "", "td", 2) +
  days.map(d => cell("k b r tight yel", d, "th")).join("") + tail + "</tr>";
html += "<tr>" + side(21) + blanks(3) + cell("kr") + cell("k c d2", "EX-1048", "td", 1, 2) + cell("k b c gold", "HM", "th") +
  hm.map(v => cell("k r mid", v)).join("") + tail + "</tr>";
html += "<tr>" + side(22) + blanks(3) + cell("kr") + cell("k b c gold", "PA", "th") +
  pa.map(v => cell("k r tight", v + "%")).join("") + tail + "</tr>";
html += "<tr>" + side(23) + blanks(6) + blanks(16, "kb") + tail + "</tr>";

function chart() {
  const left = 22, top = 39, bottom = 93, step = 438 / 16;
  const x = i => left + step * (i + 0.5);
  const py = i => bottom - pa[i] * 0.54;
  const line = (a, b, c, d, s) => `<path d="M${a} ${b}L${c} ${d}" stroke="${s}" fill="none"/>`;
  const text = (a, b, t, extra = "") => `<text x="${a}" y="${b}" ${extra}>${t}</text>`;
  let s = `<svg viewBox="0 0 484 108" preserveAspectRatio="none" font-family="Lato" font-size="6" fill="#444" text-anchor="middle">`;
  s += text(242, 14, "HM &amp; PA", 'font-size="9" font-weight="700" fill="#111"');
  s += `<rect x="195" y="25" width="13" height="4" fill="#001f60"/>` + line(248, 27, 260, 27, "#888");
  s += text(210, 29, "EX-1048 HM", 'font-weight="700" font-size="5" text-anchor="start" fill="#111"');
  s += text(262, 29, "EX-1048 PA", 'font-weight="700" font-size="5" text-anchor="start" fill="#111"');
  for (let i = 0; i <= 5; i++) {
    const y = Math.round(top + i * 10.8) + 0.5;
    s += line(left, y, left + 438, y, "#dcdcdc") + text(466, y + 2, 100 - i * 20 + "%", 'text-anchor="start" font-size="5"');
  }
  for (let i = 0; i <= 16; i++) s += line(left + step * i, top, left + step * i, bottom, "#dcdcdc");
  ["15,0", "10,0", "5,0", "-"].forEach((t, i) => { s += text(16, top + 2 + i * 18, t, 'text-anchor="end"'); });
  s += `<path d="M${pa.map((_, i) => x(i) + " " + py(i)).join("L")}" fill="none" stroke="#777"/>`;
  hm.forEach((t, i) => {
    const v = parseFloat(t.replace(",", ".")) || 0, y = bottom - v * 3.6;
    const w = v ? 12 : 7, ly = v > 3 ? y + 2 : 82;
    const bar = v > 3 ? y : 91;
    if (v) s += `<rect x="${x(i) - 4.5}" y="${bar}" width="9" height="${bottom - bar}" fill="#001f60"/>`;
    s += `<rect x="${x(i) - w / 2}" y="${ly}" width="${w}" height="9" fill="#a9a9a9"/>` + text(x(i), ly + 7, t, 'font-weight="700" fill="#111"');
    s += `<rect x="${x(i) - 8.5}" y="${py(i) - 4.5}" width="17" height="9" fill="#001f60"/>` + text(x(i), py(i) + 2, pa[i] + "%", 'font-weight="700" font-size="6" fill="#fff"');
    s += text(x(i), 103, days[i], 'font-size="5"');
  });
  return s + "</svg>";
}
for (let r = 24; r <= 34; r++) {
  html += "<tr>" + side(r) + blanks(5) + cell("kr") + (r === 24 ? cell("chart s16 d11", chart(), "td", 16, 11) : "") + tail + "</tr>";
}
grid.innerHTML = html + "</tbody>";
```
